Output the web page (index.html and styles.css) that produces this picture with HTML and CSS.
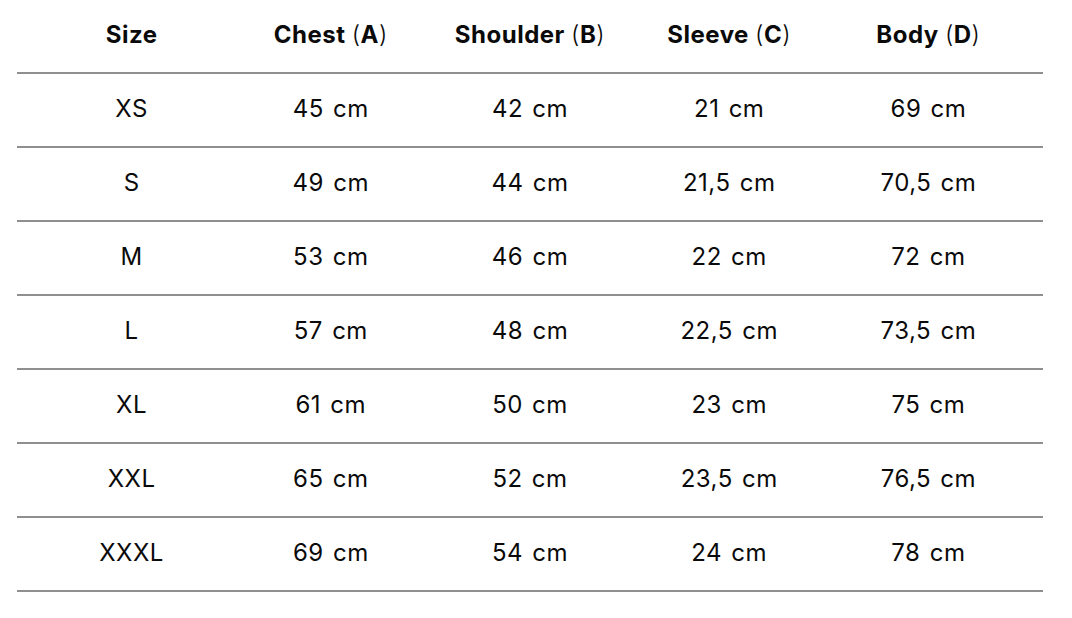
FILE: index.html
```html
<!DOCTYPE html>
<html lang="en">
<head>
<meta charset="utf-8">
<title>Size guide</title>
<link rel="stylesheet" href="styles.css">
</head>
<body>
<div class="size-table">
  <div class="row head">
    <div class="cell">Size</div>
    <div class="cell">Chest <span class="paren">(</span>A<span class="paren">)</span></div>
    <div class="cell">Shoulder <span class="paren">(</span>B<span class="paren">)</span></div>
    <div class="cell">Sleeve <span class="paren">(</span>C<span class="paren">)</span></div>
    <div class="cell">Body <span class="paren">(</span>D<span class="paren">)</span></div>
  </div>
  <div class="row"><div class="cell">XS</div><div class="cell">45 cm</div><div class="cell">42 cm</div><div class="cell">21 cm</div><div class="cell">69 cm</div></div>
  <div class="row"><div class="cell">S</div><div class="cell">49 cm</div><div class="cell">44 cm</div><div class="cell">21,5 cm</div><div class="cell">70,5 cm</div></div>
  <div class="row"><div class="cell">M</div><div class="cell">53 cm</div><div class="cell">46 cm</div><div class="cell">22 cm</div><div class="cell">72 cm</div></div>
  <div class="row"><div class="cell">L</div><div class="cell">57 cm</div><div class="cell">48 cm</div><div class="cell">22,5 cm</div><div class="cell">73,5 cm</div></div>
  <div class="row"><div class="cell">XL</div><div class="cell">61 cm</div><div class="cell">50 cm</div><div class="cell">23 cm</div><div class="cell">75 cm</div></div>
  <div class="row"><div class="cell">XXL</div><div class="cell">65 cm</div><div class="cell">52 cm</div><div class="cell">23,5 cm</div><div class="cell">76,5 cm</div></div>
  <div class="row"><div class="cell">XXXL</div><div class="cell">69 cm</div><div class="cell">54 cm</div><div class="cell">24 cm</div><div class="cell">78 cm</div></div>
</div>
</body>
</html>
```

FILE: styles.css
```css
html, body {
  margin: 0;
  padding: 0;
  background: #ffffff;
}

body {
  font-family: Inter, "Liberation Sans", sans-serif;
  color: #0a0a0a;
}

.size-table {
  width: 1026px;
  margin-left: 17px;
}

.row {
  display: grid;
  grid-template-columns: repeat(5, 1fr);
  padding: 0 15px;
  height: 72px;
  border-bottom: 2px solid #8f8f8f;
  align-items: center;
  font-size: 24px;
  font-weight: 400;
  letter-spacing: 0.5px;
  word-spacing: 2px;
}

.cell {
  text-align: center;
  padding-bottom: 4px;
  white-space: nowrap;
}

.head {
  font-weight: 700;
  word-spacing: 0;
}

.paren {
  font-weight: 300;
}
```
